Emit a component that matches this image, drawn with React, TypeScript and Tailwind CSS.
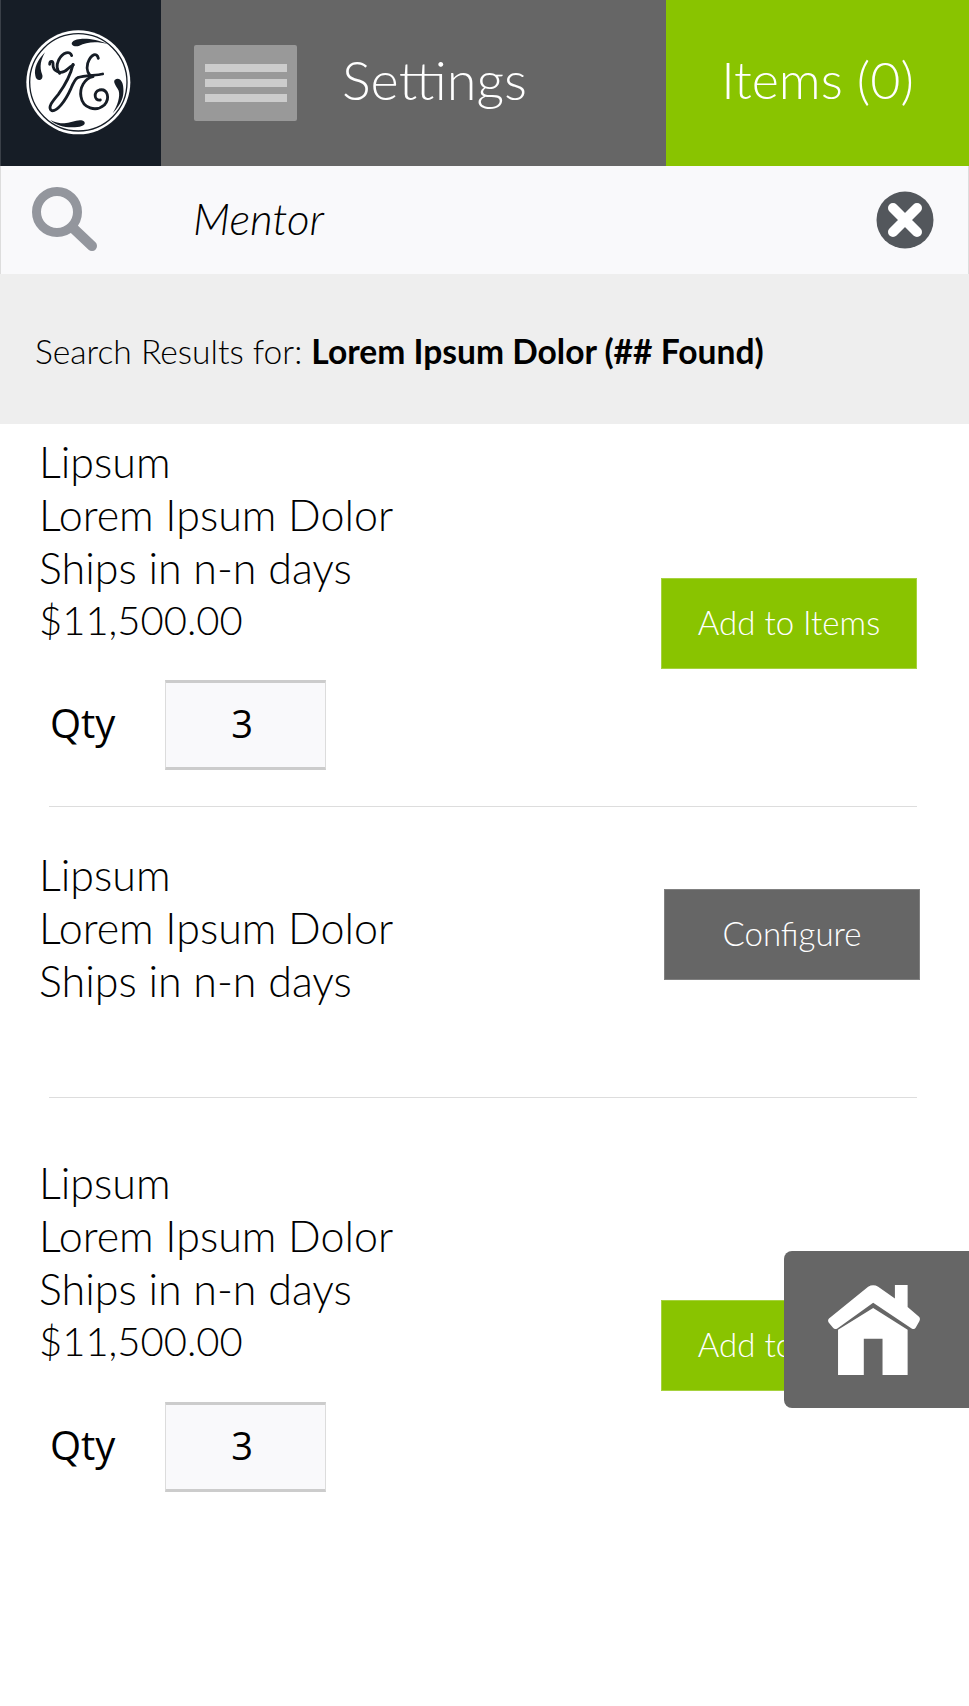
import React from "react";

const font = { fontFamily: '"Lato", "Noto Sans", sans-serif' };
const openSans = { fontFamily: '"Open Sans", sans-serif' };

function GeLogo() {
  return (
    <svg width="115" height="115" viewBox="0 0 345 345" aria-hidden="true">
      <circle cx="172" cy="172" r="156" fill="#fff" />
      <circle cx="172" cy="172" r="146" fill="none" stroke="#161d26" strokeWidth="4" />
      <g fill="#161d26">
        <path d="M155 50 C165 38 215 36 260 57 C225 48 195 52 175 62 C160 68 146 58 155 50 Z" />
        <path d="M43 152 C38 130 50 105 72 82 C60 105 54 125 64 150 C68 167 46 172 43 152 Z" />
        <path d="M281 165 C295 153 307 170 307 190 C309 215 303 235 275 265 C290 240 298 215 293 197 C285 182 276 172 281 165 Z" />
        <path d="M190 290 C178 278 150 293 130 295 C115 295 100 292 88 285 C105 302 130 307 150 307 C170 308 198 302 190 290 Z" />
      </g>
      <g fill="none" stroke="#161d26" strokeLinecap="round" strokeLinejoin="round" strokeWidth="8.5">
        <path d="M86 118 C86 106 98 106 96 118 C95 138 120 152 140 132 C147 125 152 122 157 120" />
        <path d="M152 92 C148 76 125 82 113 105 C106 120 108 135 116 145" />
        <path d="M156 118 C150 145 138 172 112 208 C95 228 78 248 92 257 C108 260 132 230 150 190 C156 175 162 162 170 158 C190 150 225 152 245 147" />
        <path d="M232 100 C228 82 210 85 200 115 C195 135 202 150 216 155 C190 160 175 190 180 215 C185 250 225 262 250 240 C268 220 260 190 235 195 C218 200 218 228 238 225" />
      </g>
    </svg>
  );
}

function Lines({ price }: { price?: boolean }) {
  return (
    <div className="pl-[39px] text-[43px] leading-[53px] font-light text-black">
      <div>Lipsum</div>
      <div>Lorem Ipsum Dolor</div>
      <div>Ships in n-n days</div>
      {price && <div className="text-[40px]">$11,500.00</div>}
    </div>
  );
}

function Qty({ top }: { top: string }) {
  return (
    <div className={`flex items-center pl-[50px] ${top}`}>
      <span className="w-[115px] pb-[6px] text-[40px] leading-[53px] text-black" style={openSans}>Qty</span>
      <div
        className="w-[161px] h-[90px] bg-[#f9f9fb] border-x border-x-[#dcdcdc] border-y-[3px] border-y-[#cccccc] flex items-center justify-center pr-[7px] pb-[3px] text-[38px] text-black"
        style={openSans}
      >
        3
      </div>
    </div>
  );
}

function Btn({ label, green }: { label: string; green: boolean }) {
  return (
    <div
      className={`w-[256px] h-[91px] flex items-center justify-center pb-[1px] text-[33px] font-light text-white border ${
        green ? "bg-[#89c400] border-[#a6d23f]" : "bg-[#666666] border-[#808080]"
      }`}
    >
      {label}
    </div>
  );
}

function Rule() {
  return <div className="ml-[49px] mr-[52px] h-px bg-[#dddddd]" />;
}

export default function App() {
  return (
    <div className="relative w-[969px] h-[1706px] bg-white overflow-hidden" style={font}>
      <header className="flex h-[166px]">
        <div className="w-[161px] bg-[#161d26] flex items-center justify-center border-l border-[#3a4048] pr-[6px] pb-[1px]">
          <GeLogo />
        </div>
        <div className="w-[505px] bg-[#666666] flex items-center pl-[33px]">
          <div className="w-[103px] h-[76px] rounded-[2px] bg-[#999999] flex flex-col items-center justify-center gap-[7px]">
            <span className="w-[82px] h-[8px] bg-[#cccccc]" />
            <span className="w-[82px] h-[8px] bg-[#cccccc]" />
            <span className="w-[82px] h-[8px] bg-[#cccccc]" />
          </div>
          <span className="ml-[45px] pb-[8px] text-[54px] font-light text-white">Settings</span>
        </div>
        <div className="flex-1 bg-[#89c400] flex items-center justify-center">
          <span className="pb-[8px] text-[52px] font-light text-white">Items (0)</span>
        </div>
      </header>
      <div className="flex items-center h-[108px] bg-[#f9f9fb] border-x border-[#dddddd]">
        <svg className="ml-[31px]" width="66" height="66" viewBox="0 0 66 66" aria-hidden="true">
          <circle cx="25" cy="25" r="20.5" fill="none" stroke="#93969d" strokeWidth="9" />
          <path d="M41 41 L60 59" stroke="#93969d" strokeWidth="10" strokeLinecap="round" />
        </svg>
        <span className="ml-[95px] pb-[4px] text-[44px] italic font-light text-black">Mentor</span>
        <svg className="ml-auto mr-[34px]" width="58" height="58" viewBox="0 0 58 58" aria-hidden="true">
          <circle cx="29" cy="29" r="28.5" fill="#53575c" />
          <path d="M17 17 L41 41 M41 17 L17 41" stroke="#fff" strokeWidth="10" strokeLinecap="round" />
        </svg>
      </div>
      <div className="h-[150px] bg-[#eeeeee] flex items-center pl-[35px] pt-[4px] text-[33.6px] text-black">
        <span className="font-light">Search Results for:&nbsp;</span>
        <span className="font-bold">Lorem Ipsum Dolor (## Found)</span>
      </div>

      <section className="flex justify-between h-[382px] pt-[11px] pr-[52px]">
        <div>
          <Lines price />
          <Qty top="mt-[33px]" />
        </div>
        <div className="pt-[143px]">
          <Btn label="Add to Items" green />
        </div>
      </section>
      <Rule />
      <section className="flex justify-between h-[290px] pt-[41px] pr-[49px]">
        <Lines />
        <div className="pt-[41px]">
          <Btn label="Configure" green={false} />
        </div>
      </section>
      <Rule />
      <section className="flex justify-between pt-[58px] pr-[52px]">
        <div>
          <Lines price />
          <Qty top="mt-[34px]" />
        </div>
        <div className="pt-[144px]">
          <Btn label="Add to Items" green />
        </div>
      </section>

      <div className="absolute left-[784px] top-[1251px] w-[185px] h-[157px] rounded-l-[8px] bg-[#666666] flex items-center justify-center pr-[5px]">
        <svg width="92" height="90" viewBox="0 0 275 269" aria-hidden="true">
          <path
            fill="#fff"
            d="M120 5 Q135 -3 150 5 L200 40 L200 0 L238 0 L238 66 L272 95 Q277 100 273 108 L262 128 Q258 134 250 130 L135 53 L28 130 Q20 134 15 128 L2 112 Q-2 105 3 100 Z"
          />
          <path fill="#fff" d="M30 134 L135 69 L238 134 L238 269 L163 269 L163 161 L107 161 L107 269 L30 269 Z" />
        </svg>
      </div>
    </div>
  );
}
